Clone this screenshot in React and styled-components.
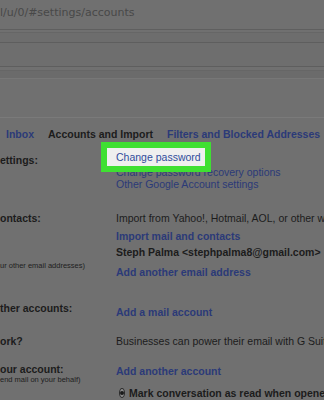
import React from "react";
import styled, { createGlobalStyle } from "styled-components";

const GlobalStyle = createGlobalStyle`
  html, body {
    margin: 0;
    padding: 0;
    background: #707070;
    overflow: hidden;
  }
  body {
    font-family: "Liberation Sans", Arial, sans-serif;
  }
`;

const Page = styled.div`
  width: 324px;
  height: 400px;
  overflow: hidden;
  position: relative;
`;

const AddressBar = styled.div`
  height: 30px;
  box-sizing: border-box;
  padding-top: 6px;
  border-bottom: 1px solid #5f5f5f;
  font-family: "DejaVu Sans", sans-serif;
  font-size: 11px;
  line-height: 14px;
  color: #484848;
  white-space: nowrap;
`;

const Band = styled.div`
  height: ${(p) => p.h}px;
  background: ${(p) => p.bg || "#707070"};
  border-bottom: 1px solid ${(p) => p.line || "#5e5e5e"};
`;

const Tabs = styled.div`
  display: flex;
  gap: 14px;
  padding: 10px 0 0 6px;
  height: 12px;
  white-space: nowrap;
`;

const Tab = styled.span`
  font-size: 10.5px;
  line-height: 12px;
  font-weight: bold;
  color: ${(p) => (p.active ? "#1c1c1c" : "#2b3a78")};
`;

const Row = styled.div`
  display: grid;
  grid-template-columns: 116px 1fr;
  padding-top: ${(p) => p.pt || 0}px;
  white-space: nowrap;
`;

const Label = styled.div`
  display: flex;
  flex-direction: column;
  overflow: hidden;
`;

const LabelText = styled.div`
  font-size: 10.5px;
  line-height: 12px;
  height: 12px;
  font-weight: bold;
  color: #1c1c1c;
`;

const LabelNote = styled.div`
  font-size: 7.5px;
  line-height: 10px;
  color: #1e1e1e;
  margin-top: ${(p) => p.mt || 0}px;
`;

const Content = styled.div`
  display: flex;
  flex-direction: column;
  overflow: ${(p) => (p.open ? "visible" : "hidden")};
  min-width: 0;
`;

const Line = styled.div`
  position: relative;
  font-size: 10.5px;
  line-height: 12px;
  height: 12px;
  margin-top: ${(p) => p.mt || 0}px;
  font-weight: ${(p) => (p.bold ? "bold" : "normal")};
  color: ${(p) => (p.link ? "#2b3a78" : "#1c1c1c")};
  display: flex;
  align-items: center;
`;

const Highlight = styled.div`
  position: absolute;
  left: -15px;
  top: -12px;
  width: 89px;
  height: 18px;
  padding-left: 9px;
  box-sizing: content-box;
  background: #efefef;
  border: 6px solid #3fe032;
  color: #2f4c9c;
  font-size: 10.5px;
  line-height: 18px;
  font-weight: normal;
  white-space: nowrap;
  z-index: 2;
`;

const Radio = styled.span`
  width: 8px;
  height: 8px;
  border: 1px solid #2a2a2a;
  border-radius: 50%;
  margin: 0 4px 0 3px;
  display: inline-flex;
  align-items: center;
  justify-content: center;
  background: #8a8a8a;

  &::after {
    content: "";
    width: 4px;
    height: 4px;
    border-radius: 50%;
    background: #1a1a1a;
  }
`;

export default function App() {
  return (
    <Page>
      <GlobalStyle />
      <AddressBar>l/u/0/#settings/accounts</AddressBar>
      <Band h={2} line="#666" />
      <Band h={9} bg="#6d6d6d" />
      <Band h={23} bg="#6e6e6e" />
      <Band h={3} line="#666" />
      <Band h={7} bg="#6b6b6b" line="#777" />
      <Band h={38} line="#7a7a7a" />
      <Tabs>
        <Tab>Inbox</Tab>
        <Tab active>Accounts and Import</Tab>
        <Tab>Filters and Blocked Addresses</Tab>
      </Tabs>

      <Row pt={14}>
        <Label>
          <LabelText>ettings:</LabelText>
        </Label>
        <Content open>
          <Line link>
            <Highlight>Change password</Highlight>
          </Line>
          <Line link>Change password recovery options</Line>
          <Line link>Other Google Account settings</Line>
        </Content>
      </Row>

      <Row pt={22}>
        <Label>
          <LabelText>ontacts:</LabelText>
        </Label>
        <Content>
          <Line>Import from Yahoo!, Hotmail, AOL, or other webmail or POP3 accounts.</Line>
          <Line link bold mt={6}>Import mail and contacts</Line>
        </Content>
      </Row>

      <Row pt={4}>
        <Label>
          <LabelText />
          <LabelNote mt={3}>ur other email addresses)</LabelNote>
        </Label>
        <Content>
          <Line bold>Steph Palma &lt;stephpalma8@gmail.com&gt;</Line>
          <Line link bold mt={8}>Add another email address</Line>
        </Content>
      </Row>

      <Row pt={24}>
        <Label>
          <LabelText>ther accounts:</LabelText>
        </Label>
        <Content>
          <Line link bold mt={4}>Add a mail account</Line>
        </Content>
      </Row>

      <Row pt={17}>
        <Label>
          <LabelText>ork?</LabelText>
        </Label>
        <Content>
          <Line>Businesses can power their email with G Suite.</Line>
        </Content>
      </Row>

      <Row pt={16}>
        <Label>
          <LabelText>our account:</LabelText>
          <LabelNote>end mail on your behalf)</LabelNote>
        </Label>
        <Content>
          <Line link bold mt={2}>Add another account</Line>
          <Line bold mt={10}>
            <Radio />
            Mark conversation as read when opened by others
          </Line>
        </Content>
      </Row>
    </Page>
  );
}
